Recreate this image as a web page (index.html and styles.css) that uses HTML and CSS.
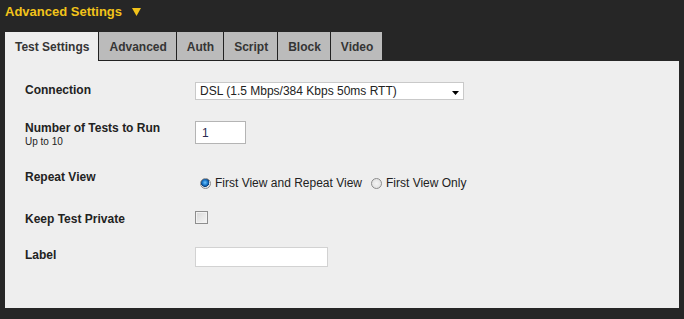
FILE: index.html
```html
<!DOCTYPE html>
<html>
<head>
    <title>Advanced Settings</title>
    <link rel="stylesheet" href="styles.css">
</head>
<body>
    <div class="header">
        <span class="title">Advanced Settings</span>
        <svg class="caret" width="9" height="8" viewBox="0 0 9 8"><path d="M0 0H9L4.5 8Z" fill="#f2c31a"/></svg>
    </div>

    <ul class="tabs">
        <li class="tab active">Test Settings</li>
        <li class="tab">Advanced</li>
        <li class="tab">Auth</li>
        <li class="tab">Script</li>
        <li class="tab">Block</li>
        <li class="tab">Video</li>
    </ul>

    <div class="panel">
        <div class="row">
            <label class="field-label first">Connection</label>
            <div class="select-wrap">
                <select class="select">
                    <option>DSL (1.5 Mbps/384 Kbps 50ms RTT)</option>
                </select>
                <svg class="select-arrow" width="7" height="4" viewBox="0 0 7 4"><path d="M0 0H7L3.5 4Z" fill="#000"/></svg>
            </div>
        </div>

        <div class="row tall">
            <label class="field-label">Number of Tests to Run<small class="hint">Up to 10</small></label>
            <input type="text" class="text-input runs" value="1">
        </div>

        <div class="row">
            <label class="field-label">Repeat View</label>
            <div class="radios">
                <input type="radio" name="fvonly" class="radio" checked>
                <span>First View and Repeat View</span>
                <input type="radio" name="fvonly" class="radio second">
                <span>First View Only</span>
            </div>
        </div>

        <div class="row">
            <label class="field-label first">Keep Test Private</label>
            <input type="checkbox" class="checkbox">
        </div>

        <div class="row">
            <label class="field-label first">Label</label>
            <input type="text" class="text-input label-input">
        </div>
    </div>
</body>
</html>
```

FILE: styles.css
```css
body { margin: 0; background: #262626; font-family: "Liberation Sans", Arial, sans-serif; font-size: 12px; color: #222; }

.header { display: flex; align-items: center; padding: 4px 5px 0; height: 16px; }
.title { color: #f2c31a; font-size: 13px; font-weight: bold; line-height: 16px; }
.caret { margin-left: 10px; }

.tabs { display: flex; list-style: none; margin: 12px 5px 0; padding: 0; }
.tab { background: #bbbbbb; color: #353535; font-weight: bold; padding: 3px 9px 0 10px; line-height: 25px; border-left: 1px solid #222; border-bottom: 1px solid #222; }
.tab.active { background: #eeeeee; border-left: none; border-bottom-color: #eeeeee; }

.panel { background: #eeeeee; margin: 0 5px; padding: 21px 20px 41px; display: flex; flex-direction: column; gap: 21px; }
.row { display: flex; align-items: flex-start; }
.row.tall { margin-bottom: 1px; }
.field-label { width: 170px; flex-shrink: 0; font-weight: bold; line-height: 14px; color: #222; }
.field-label.first { margin-top: 1px; }
.hint { display: block; font-size: 10px; font-weight: normal; line-height: 13px; }

.select-wrap { position: relative; }
.select { appearance: none; width: 269px; height: 18px; margin: 0; padding: 0 0 0 4px; border: 1px solid #c9c9c9; background: #fff; font-family: inherit; font-size: 12px; color: #222; border-radius: 0; }
.select-arrow { position: absolute; right: 5px; top: 9px; }

.text-input { margin: 0; box-sizing: border-box; background: #fff; font-family: inherit; font-size: 12px; color: #2a2a50; border-radius: 0; }
.runs { width: 51px; height: 23px; padding: 0 6px; border: 1px solid #b4b4b4; }
.label-input { width: 133px; height: 20px; padding: 0 4px; border: 1px solid #d2d2d2; }

.radios { display: flex; align-items: center; margin: 6px 0 0 5px; line-height: 14px; color: #222; }
.radio { appearance: none; width: 11px; height: 11px; margin: 0 4px 0 0; border: 1px solid #8c8c8c; border-radius: 50%; box-sizing: border-box; background: radial-gradient(circle, #f4f4f4 0, #dcdcdc 100%); }
.radio:checked { background: radial-gradient(circle at 45% 40%, #6ec6ff 0, #1a77c9 35%, #0b3f7a 55%, #e8e8e8 62%, #d6d6d6 100%); }
.radio.second { margin-left: 9px; }

.checkbox { appearance: none; width: 13px; height: 13px; margin: 0; box-sizing: border-box; border: 1px solid #8e8e8e; background: linear-gradient(135deg, #d8d8d8, #f6f6f6); box-shadow: inset 0 0 0 1px #f2f2f2; border-radius: 0; }
```
